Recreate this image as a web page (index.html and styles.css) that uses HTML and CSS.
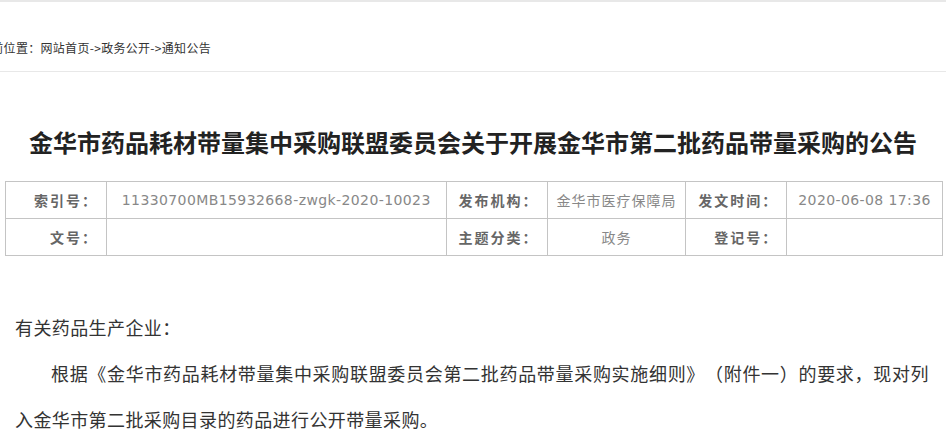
FILE: index.html
```html
<!DOCTYPE html>
<html lang="zh-CN">
<head>
    <meta charset="UTF-8">
    <meta name="viewport" content="width=device-width, initial-scale=1.0">
    <title>金华市医疗保障局 - 通知公告</title>
    <link rel="stylesheet" href="styles.css">
</head>
<body>
    <div class="crumb">
        <span class="crumb-text">当前位置：<a href="#">网站首页</a>-&gt;<a href="#">政务公开</a>-&gt;<a href="#">通知公告</a></span>
    </div>

    <main class="article">
        <h1 class="title">金华市药品耗材带量集中采购联盟委员会关于开展金华市第二批药品带量采购的公告</h1>

        <table class="info">
            <tr>
                <th class="c1">索引号：</th>
                <td class="c2 num">11330700MB15932668-zwgk-2020-10023</td>
                <th class="c3">发布机构：</th>
                <td class="c4">金华市医疗保障局</td>
                <th class="c5">发文时间：</th>
                <td class="c6 num">2020-06-08 17:36</td>
            </tr>
            <tr>
                <th>文号：</th>
                <td></td>
                <th>主题分类：</th>
                <td>政务</td>
                <th>登记号：</th>
                <td></td>
            </tr>
        </table>

        <div class="content">
            <p>有关药品生产企业：</p>
            <p class="indent">根据《金华市药品耗材带量集中采购联盟委员会第二批药品带量采购实施细则》（附件一）的要求，现对列入金华市第二批采购目录的药品进行公开带量采购。</p>
        </div>
    </main>
</body>
</html>
```

FILE: styles.css
```css
body {
    margin: 0;
    font-family: "Noto Sans CJK SC", "Microsoft YaHei", sans-serif;
    color: #333;
    background: #fff;
    overflow: hidden;
    text-spacing-trim: space-all;
}

.crumb {
    border-top: 2px solid #e8e8e8;
    border-bottom: 1px solid #e8e8e8;
    height: 72px;
    box-sizing: border-box;
    padding-top: 37px;
    font-size: 12px;
    line-height: 18px;
    letter-spacing: 0.3px;
    white-space: nowrap;
}

.crumb-text {
    display: inline-block;
    margin-left: -21px;
}

.crumb a {
    color: #333;
    text-decoration: none;
}

.title {
    margin: 0;
    padding-top: 53px;
    font-size: 24px;
    line-height: 34px;
    font-weight: bold;
    text-align: center;
    color: #222;
    white-space: nowrap;
}

.info {
    margin: 22px 0 0 5px;
    width: 938px;
    border-collapse: collapse;
    font-size: 14px;
    letter-spacing: 1px;
}

.info th,
.info td {
    border: 1px solid #c4c4c4;
    height: 37px;
    padding: 0;
    box-sizing: border-box;
}

.info th {
    text-align: right;
    padding-right: 8px;
    color: #666;
    font-weight: bold;
    letter-spacing: 2px;
}

.info td {
    text-align: center;
    color: #888;
}

.info .num {
    font-family: "DejaVu Sans", Verdana, sans-serif;
    font-size: 14px;
    letter-spacing: 0.4px;
}

.info .c1 { width: 101px; }
.info .c2 { width: 340px; }
.info .c3 { width: 101px; }
.info .c4 { width: 139px; }
.info .c5 { width: 101px; }
.info .c6 { width: 156px; }

.content {
    padding: 48px 17px 0 15px;
    font-size: 18px;
    line-height: 46px;
    letter-spacing: 0.4px;
    text-align: justify;
}

.content p {
    margin: 0;
}

.indent {
    text-indent: 2em;
}
```
